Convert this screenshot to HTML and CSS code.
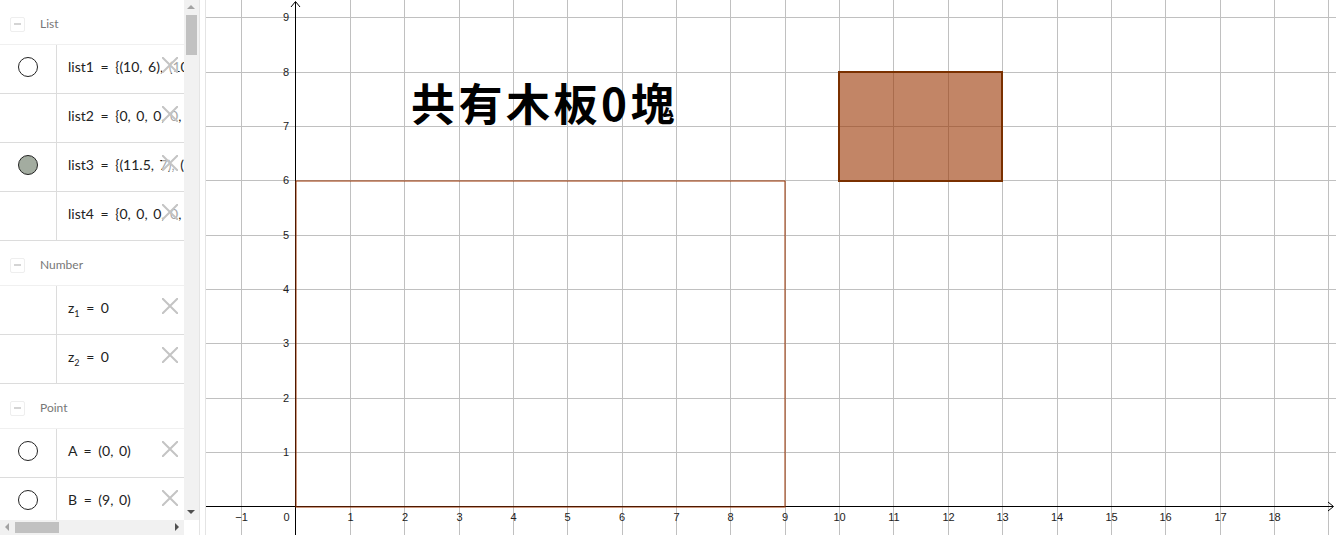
FILE: index.html
```html
<!DOCTYPE html>
<html lang="en">
  <head>
    <meta charset="UTF-8" />
    <meta name="viewport" content="width=device-width, initial-scale=1.0" />
    <title>GeoGebra</title>
    <link rel="stylesheet" href="styles.css">
  </head>
  <body>
    <div class="applet">
      <aside class="algebra">
        <div class="algebra-main">
          <div class="algebra-list">
            <div class="group-head"><span class="collapse"></span><span class="group-name">List</span></div>
            <div class="row">
              <div class="marble-cell"><span class="marble"></span></div>
              <div class="formula">list1 <span class="eq">=</span> {(10, 6), (10, 8)}</div>
              <svg class="del" viewBox="0 0 16 16"><path d="M0 0L16 16M16 0L0 16" /></svg>
            </div>
            <div class="row">
              <div class="marble-cell"></div>
              <div class="formula">list2 <span class="eq">=</span> {0, 0, 0, 0, 0}</div>
              <svg class="del" viewBox="0 0 16 16"><path d="M0 0L16 16M16 0L0 16" /></svg>
            </div>
            <div class="row">
              <div class="marble-cell"><span class="marble on"></span></div>
              <div class="formula">list3 <span class="eq">=</span> {(11.5, 7), (11.5, 7)}</div>
              <svg class="del" viewBox="0 0 16 16"><path d="M0 0L16 16M16 0L0 16" /></svg>
            </div>
            <div class="row">
              <div class="marble-cell"></div>
              <div class="formula">list4 <span class="eq">=</span> {0, 0, 0, 0, 0}</div>
              <svg class="del" viewBox="0 0 16 16"><path d="M0 0L16 16M16 0L0 16" /></svg>
            </div>
            <div class="group-head"><span class="collapse"></span><span class="group-name">Number</span></div>
            <div class="row">
              <div class="marble-cell"></div>
              <div class="formula">z<sub>1</sub> <span class="eq">=</span> 0</div>
              <svg class="del" viewBox="0 0 16 16"><path d="M0 0L16 16M16 0L0 16" /></svg>
            </div>
            <div class="row">
              <div class="marble-cell"></div>
              <div class="formula">z<sub>2</sub> <span class="eq">=</span> 0</div>
              <svg class="del" viewBox="0 0 16 16"><path d="M0 0L16 16M16 0L0 16" /></svg>
            </div>
            <div class="group-head"><span class="collapse"></span><span class="group-name">Point</span></div>
            <div class="row">
              <div class="marble-cell"><span class="marble"></span></div>
              <div class="formula">A <span class="eq">=</span> (0, 0)</div>
              <svg class="del" viewBox="0 0 16 16"><path d="M0 0L16 16M16 0L0 16" /></svg>
            </div>
            <div class="row">
              <div class="marble-cell"><span class="marble"></span></div>
              <div class="formula">B <span class="eq">=</span> (9, 0)</div>
              <svg class="del" viewBox="0 0 16 16"><path d="M0 0L16 16M16 0L0 16" /></svg>
            </div>
          </div>
          <div class="vscroll">
            <span class="arrow-up"></span>
            <span class="vthumb"></span>
            <span class="arrow-down"></span>
          </div>
        </div>
        <div class="hscroll">
          <span class="arrow-left"></span>
          <span class="hthumb"></span>
          <span class="arrow-right"></span>
        </div>
      </aside>
      <div class="splitter"></div>
      <svg class="graphics" viewBox="206 0 1130 535" width="1130" height="535">
        <g class="grid">
          <path d="M241.5 0V535M350.5 0V535M404.5 0V535M459.5 0V535M513.5 0V535M567.5 0V535M622.5 0V535M676.5 0V535M730.5 0V535M785.5 0V535M839.5 0V535M893.5 0V535M948.5 0V535M1002.5 0V535M1057.5 0V535M1111.5 0V535M1165.5 0V535M1220.5 0V535M1274.5 0V535M1328.5 0V535" />
          <path d="M206 17.5H1336M206 72.5H1336M206 126.5H1336M206 180.5H1336M206 235.5H1336M206 289.5H1336M206 343.5H1336M206 398.5H1336M206 452.5H1336" />
        </g>
        <g class="axes">
          <path d="M206 506.5H1333M295.5 535V2" />
          <path d="M1328 502L1333.5 506.5L1328 511M291 7L295.5 1.5L300 7" />
        </g>
        <rect class="board" x="296" y="181" width="489" height="326" />
        <rect class="piece" x="839" y="72" width="163" height="109" />
        <g class="ticks">
          <text x="241.5" y="521">−1</text>
          <text x="286.5" y="521">0</text>
          <text x="350.5" y="521">1</text>
          <text x="405" y="521">2</text>
          <text x="459.5" y="521">3</text>
          <text x="513.5" y="521">4</text>
          <text x="567.5" y="521">5</text>
          <text x="622" y="521">6</text>
          <text x="676.5" y="521">7</text>
          <text x="730.5" y="521">8</text>
          <text x="785" y="521">9</text>
          <text x="839.5" y="521">10</text>
          <text x="894" y="521">11</text>
          <text x="948.5" y="521">12</text>
          <text x="1002.5" y="521">13</text>
          <text x="1057" y="521">14</text>
          <text x="1111.5" y="521">15</text>
          <text x="1165.5" y="521">16</text>
          <text x="1220.5" y="521">17</text>
          <text x="1274.5" y="521">18</text>
        </g>
        <g class="ticks">
          <text x="286" y="456">1</text>
          <text x="286" y="402">2</text>
          <text x="286" y="347">3</text>
          <text x="286" y="293">4</text>
          <text x="286" y="239">5</text>
          <text x="286" y="184">6</text>
          <text x="286" y="130">7</text>
          <text x="286" y="76">8</text>
          <text x="286" y="21">9</text>
        </g>
        <text class="headline" x="411" y="121">共有木板0塊</text>
      </svg>
    </div>
  </body>
</html>
```

FILE: styles.css
```css
html,
body {
  margin: 0;
  height: 100%;
  overflow: hidden;
  background: white;
}
.applet {
  display: flex;
  width: 1336px;
  height: 535px;
}
.algebra {
  display: flex;
  flex-direction: column;
  width: 199px;
  flex: none;
  font-family: Lato, "Liberation Sans", sans-serif;
}
.algebra-main {
  display: flex;
  flex: 1;
  min-height: 0;
}
.algebra-list {
  width: 184px;
  overflow: hidden;
}
.group-head {
  display: flex;
  align-items: center;
  height: 45px;
  box-sizing: border-box;
  border-bottom: 1px solid #f0f0f0;
  padding-left: 10px;
}
.collapse {
  position: relative;
  width: 13px;
  height: 13px;
  margin-top: 5px;
  border: 1px solid #eeeeee;
  border-radius: 2px;
}
.collapse::after {
  content: "";
  position: absolute;
  left: 3px;
  right: 3px;
  top: 5px;
  height: 2px;
  background: #d4d4d4;
}
.group-name {
  margin-left: 15px;
  margin-top: 2px;
  font-size: 12px;
  color: #777777;
}
.row {
  position: relative;
  display: flex;
  height: 49px;
  box-sizing: border-box;
  border-bottom: 1px solid #dcdcdc;
}
.marble-cell {
  display: flex;
  justify-content: center;
  width: 57px;
  flex: none;
  padding-top: 12px;
  box-sizing: border-box;
  border-right: 1px solid #dcdcdc;
}
.marble {
  width: 18px;
  height: 18px;
  border: 1px solid #222222;
  border-radius: 50%;
  background: white;
}
.marble.on {
  background: #a3aca0;
}
.formula {
  padding-left: 11px;
  line-height: 44px;
  font-size: 14px;
  word-spacing: 2px;
  color: #222222;
  white-space: nowrap;
}
.formula sub {
  font-size: 9px;
  line-height: 0;
}
.eq {
  margin: 0 1px;
}
.del {
  position: absolute;
  left: 162px;
  top: 12px;
  width: 16px;
  height: 16px;
  fill: none;
  stroke: #c4c4c4;
  stroke-width: 2;
  background: rgba(255, 255, 255, 0.6);
}
.vscroll {
  position: relative;
  width: 15px;
  background: #f1f1f1;
}
.vthumb {
  position: absolute;
  left: 2px;
  top: 15px;
  width: 11px;
  height: 40px;
  background: #c1c1c1;
}
.arrow-up,
.arrow-down,
.arrow-left,
.arrow-right {
  position: absolute;
  width: 0;
  height: 0;
  border: 4px solid transparent;
}
.arrow-up {
  left: 3px;
  top: 5px;
  border-top: 0;
  border-bottom-color: #a3a3a3;
}
.arrow-down {
  left: 3px;
  bottom: 6px;
  border-bottom: 0;
  border-top-color: #505050;
}
.hscroll {
  position: relative;
  width: 184px;
  height: 15px;
  flex: none;
  background: #f1f1f1;
}
.hthumb {
  position: absolute;
  left: 15px;
  top: 2px;
  width: 44px;
  height: 11px;
  background: #c1c1c1;
}
.arrow-left {
  left: 5px;
  top: 3px;
  border-left: 0;
  border-right-color: #a3a3a3;
}
.arrow-right {
  right: 5px;
  top: 3px;
  border-right: 0;
  border-left-color: #505050;
}
.splitter {
  width: 7px;
  flex: none;
  box-sizing: border-box;
  background: white;
  border-left: 1px solid #e4e4e4;
  border-right: 1px solid #e4e4e4;
}
.graphics {
  display: block;
  flex: none;
  background: white;
}
.grid path {
  fill: none;
  stroke: #c0c0c0;
  stroke-width: 1;
}
.board {
  fill: none;
  stroke: #993300;
  stroke-width: 1;
}
.piece {
  fill: #993300;
  fill-opacity: 0.6;
  stroke: #7a3000;
  stroke-width: 2;
}
.axes path {
  fill: none;
  stroke: black;
  stroke-width: 1;
}
.ticks text {
  font-family: "Liberation Sans", sans-serif;
  font-size: 11px;
  fill: #222222;
  text-anchor: middle;
}
.headline {
  font-family: "Noto Sans CJK TC", sans-serif;
  font-size: 44px;
  font-weight: 700;
  letter-spacing: 3.5px;
  fill: black;
}
```
